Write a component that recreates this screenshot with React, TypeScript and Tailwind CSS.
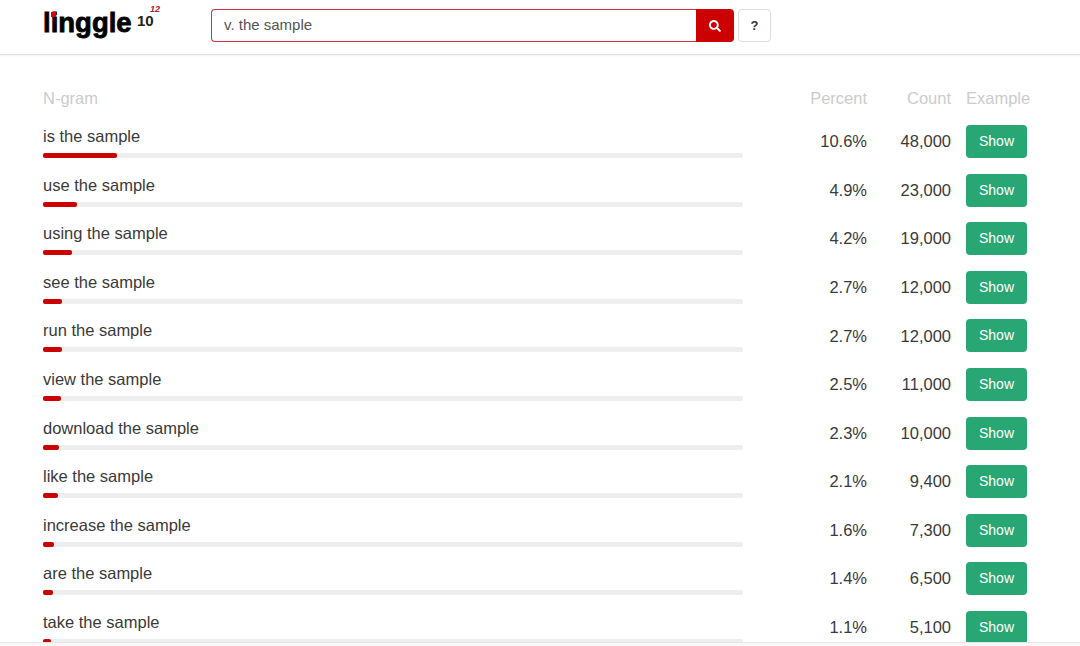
import { FaSearch } from "react-icons/fa";

const rows = [
  { t: "is the sample", p: 10.6, c: "48,000" },
  { t: "use the sample", p: 4.9, c: "23,000" },
  { t: "using the sample", p: 4.2, c: "19,000" },
  { t: "see the sample", p: 2.7, c: "12,000" },
  { t: "run the sample", p: 2.7, c: "12,000" },
  { t: "view the sample", p: 2.5, c: "11,000" },
  { t: "download the sample", p: 2.3, c: "10,000" },
  { t: "like the sample", p: 2.1, c: "9,400" },
  { t: "increase the sample", p: 1.6, c: "7,300" },
  { t: "are the sample", p: 1.4, c: "6,500" },
  { t: "take the sample", p: 1.1, c: "5,100" },
];

function Logo() {
  return (
    <div className="relative w-[168px] h-[33px] shrink-0">
      <span className="absolute left-0 top-[-6px] font-bold text-[27.5px] leading-[40px] text-black [-webkit-text-stroke:0.8px_black]">
        linggle
      </span>
      <span className="absolute left-[8px] top-[3px] w-[5px] h-[5px] bg-[#dd0000]" />
      <span className="absolute left-[94px] top-[6px] font-bold text-[15px] leading-[11px] text-[#222]">
        10
      </span>
      <span className="absolute left-[107px] top-[-3px] italic font-bold text-[9px] leading-[6px] text-[#b02030]">
        12
      </span>
    </div>
  );
}

export default function App() {
  return (
    <div className="w-[1080px] h-[646px] overflow-hidden bg-white flex flex-col font-['Liberation_Sans',sans-serif] text-[#3a3a3a]">
      <header className="h-[55px] shrink-0 flex items-start pl-[43px] pt-[9px] border-b border-[#e2e2e2] shadow-[0_1px_2px_rgba(0,0,0,0.06)]">
        <Logo />
        <div className="flex h-[33px]">
          <div className="w-[485px] h-[33px] border border-r-0 border-[#d4333a] rounded-l-[4px] pl-[12px] flex items-center text-[15px] text-[#555]">
            v. the sample
          </div>
          <div className="w-[38px] h-[33px] bg-[#cc0000] rounded-r-[4px] flex items-center justify-center text-white">
            <FaSearch size={12} />
          </div>
          <div className="ml-[4px] w-[33px] h-[33px] border border-[#dddddd] rounded-[4px] flex items-center justify-center text-[13px] font-bold text-[#333]">
            ?
          </div>
        </div>
      </header>
      <main className="flex-1 min-h-0 overflow-hidden pl-[43px] pt-[31px]">
        <div className="flex h-[24px] items-center text-[16.5px] text-[#cccccc]">
          <div className="w-[700px]">N-gram</div>
          <div className="w-[124px] text-right">Percent</div>
          <div className="w-[84px] text-right">Count</div>
          <div className="ml-[15px]">Example</div>
        </div>
        <div className="pt-[15px]">
          {rows.map((r) => (
            <div key={r.t} className="flex h-[48.6px]">
              <div className="w-[700px] flex flex-col">
                <div className="h-[29px] -mt-[1px] text-[16.5px] leading-[24px]">{r.t}</div>
                <div className="h-[5px] bg-[#eeeeee] rounded-[2px]">
                  <div className="h-full bg-[#cc0000] rounded-[2px]" style={{ width: r.p * 7 }} />
                </div>
              </div>
              <div className="w-[124px] h-[33px] flex items-center justify-end text-[16.5px]">{r.p.toFixed(1)}%</div>
              <div className="w-[84px] h-[33px] flex items-center justify-end text-[16.5px]">{r.c}</div>
              <div className="ml-[15px] w-[61px] h-[33px] rounded-[4px] bg-[#28a674] text-white text-[14px] flex items-center justify-center">
                Show
              </div>
            </div>
          ))}
        </div>
      </main>
      <div className="h-[4px] shrink-0 bg-[#f8f8f8] border-t border-[#e6e6e6]" />
    </div>
  );
}
